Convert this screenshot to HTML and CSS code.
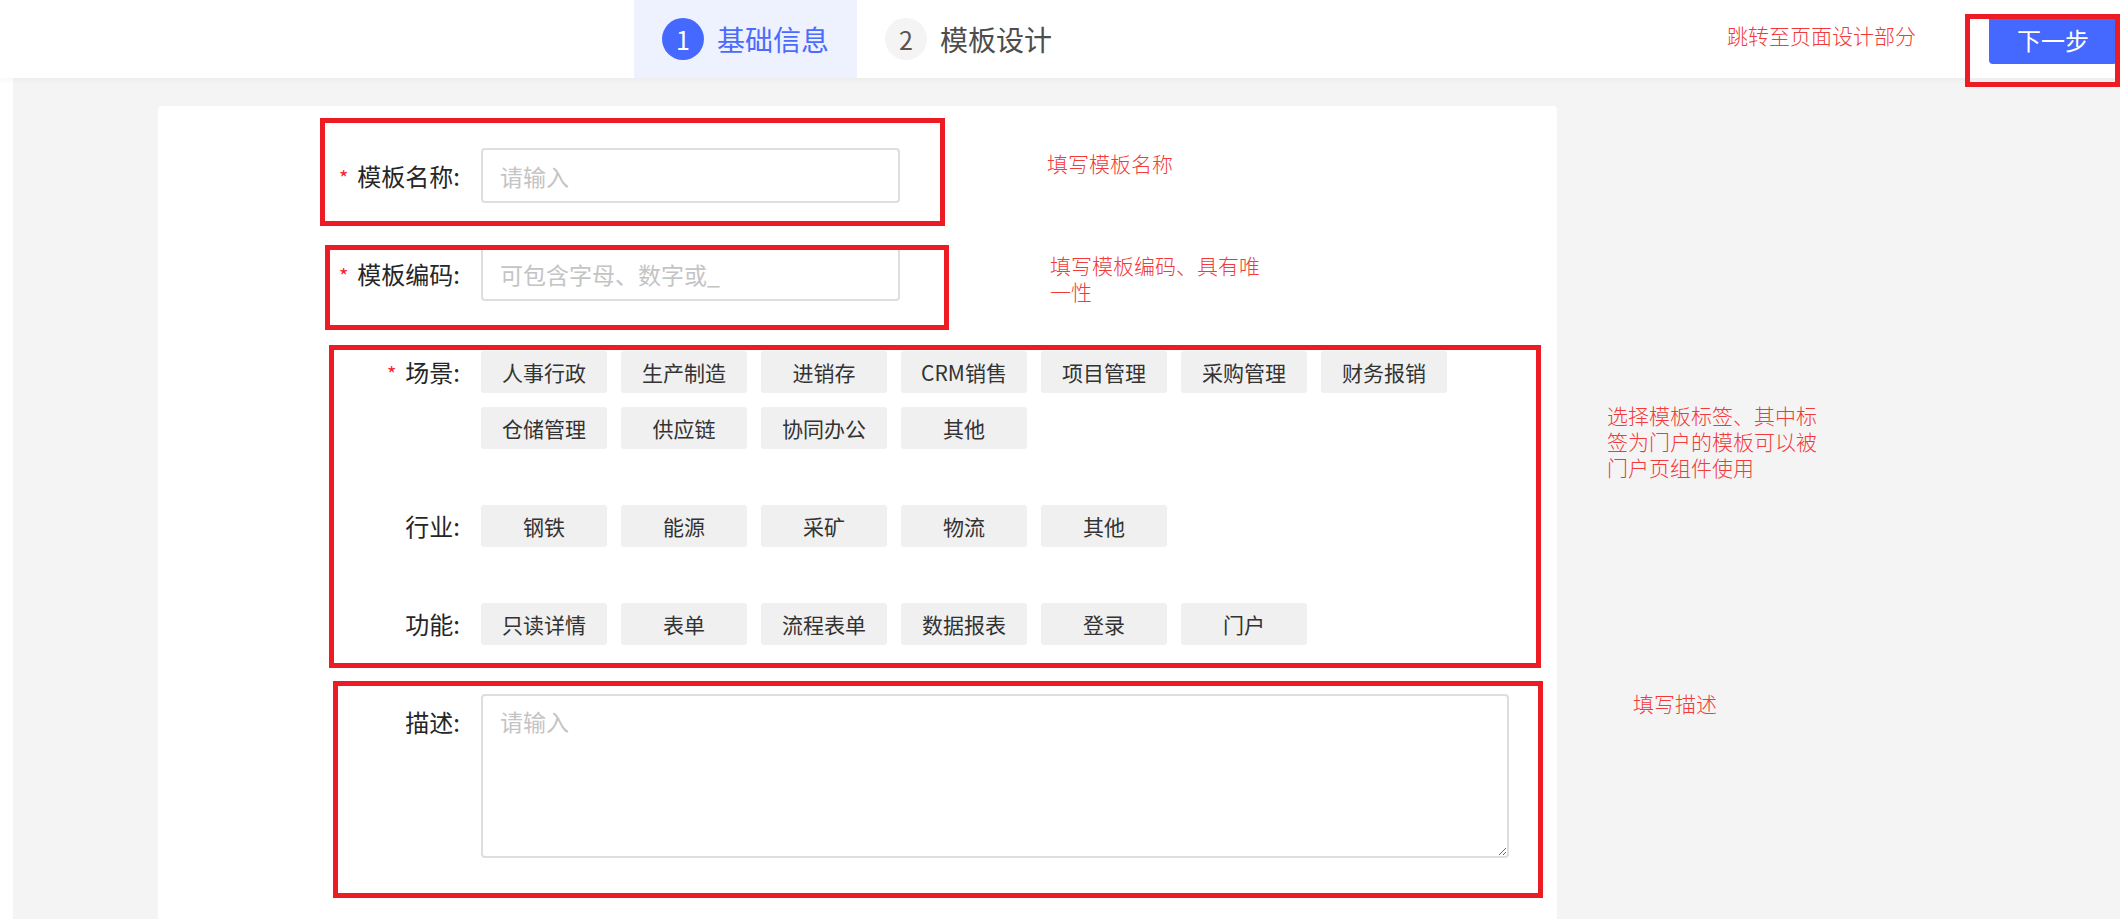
FILE: index.html
```html
<!DOCTYPE html>
<html lang="zh-CN">
<head>
    <meta charset="UTF-8">
    <meta name="viewport" content="width=device-width, initial-scale=1.0">
    <title>新建模板 - 基础信息</title>
    <link rel="stylesheet" href="styles.css">
</head>
<body>

<header class="topbar">
    <div class="steps">
        <div class="step active">
            <span class="step-num">1</span>
            <span class="step-title">基础信息</span>
        </div>
        <div class="step">
            <span class="step-num">2</span>
            <span class="step-title">模板设计</span>
        </div>
    </div>
    <button class="btn-next" type="button">下一步</button>
</header>

<main class="main">
    <div class="card">
        <form class="form">
            <div class="form-item">
                <label class="form-label"><span class="req">*</span>模板名称:</label>
                <input class="input" type="text" placeholder="请输入">
            </div>

            <div class="form-item">
                <label class="form-label"><span class="req">*</span>模板编码:</label>
                <input class="input" type="text" placeholder="可包含字母、数字或_">
            </div>

            <div class="form-item tag-item">
                <label class="form-label"><span class="req">*</span>场景:</label>
                <div class="tags">
                    <span class="tag">人事行政</span>
                    <span class="tag">生产制造</span>
                    <span class="tag">进销存</span>
                    <span class="tag">CRM销售</span>
                    <span class="tag">项目管理</span>
                    <span class="tag">采购管理</span>
                    <span class="tag">财务报销</span>
                    <span class="tag">仓储管理</span>
                    <span class="tag">供应链</span>
                    <span class="tag">协同办公</span>
                    <span class="tag">其他</span>
                </div>
            </div>

            <div class="form-item tag-item">
                <label class="form-label">行业:</label>
                <div class="tags">
                    <span class="tag">钢铁</span>
                    <span class="tag">能源</span>
                    <span class="tag">采矿</span>
                    <span class="tag">物流</span>
                    <span class="tag">其他</span>
                </div>
            </div>

            <div class="form-item tag-item">
                <label class="form-label">功能:</label>
                <div class="tags">
                    <span class="tag">只读详情</span>
                    <span class="tag">表单</span>
                    <span class="tag">流程表单</span>
                    <span class="tag">数据报表</span>
                    <span class="tag">登录</span>
                    <span class="tag">门户</span>
                </div>
            </div>

            <div class="form-item">
                <label class="form-label">描述:</label>
                <textarea class="textarea" placeholder="请输入"></textarea>
            </div>
        </form>
    </div>
</main>

<!-- review marks drawn over the page -->
<div class="marks">
    <div class="mark-box box-next"></div>
    <div class="mark-box box-name"></div>
    <div class="mark-box box-code"></div>
    <div class="mark-box box-tags"></div>
    <div class="mark-box box-desc"></div>

    <p class="note note-next">跳转至页面设计部分</p>
    <p class="note note-name">填写模板名称</p>
    <p class="note note-code">填写模板编码、具有唯一性</p>
    <p class="note note-tags">选择模板标签、其中标签为门户的模板可以被门户页组件使用</p>
    <p class="note note-desc">填写描述</p>
</div>

</body>
</html>
```

FILE: styles.css
```css
* {
    box-sizing: border-box;
}
html, body {
    height: 100%;
}
body {
    margin: 0;
    background: #ffffff;
    font-family: "Noto Sans CJK SC", "Noto Sans", sans-serif;
    color: #262626;
    overflow: hidden;
    position: relative;
}

/* top bar */
.topbar {
    height: 78px;
    display: flex;
    align-items: center;
    background: #ffffff;
    position: relative;
    z-index: 1;
    box-shadow: 0 2px 6px rgba(0, 0, 0, 0.04);
}
.steps {
    display: flex;
    align-self: stretch;
    margin-left: 634px;
}
.step {
    display: flex;
    align-items: center;
    gap: 13px;
    padding: 0 28px;
}
.step.active {
    background: #eef1fe;
}
.step-num {
    width: 42px;
    height: 42px;
    border-radius: 50%;
    background: #f4f4f4;
    color: #555555;
    font-size: 25px;
    display: flex;
    align-items: center;
    justify-content: center;
}
.step-title {
    font-size: 28px;
    color: #4d4d4d;
}
.step.active .step-num {
    background: #4568ff;
    color: #ffffff;
}
.step.active .step-title {
    color: #4a6bfb;
}
.btn-next {
    margin-left: auto;
    margin-right: 3px;
    width: 128px;
    height: 50px;
    border: none;
    border-radius: 4px;
    background: #4568ff;
    color: #ffffff;
    font-family: inherit;
    font-size: 24px;
    cursor: pointer;
}

/* content */
.main {
    height: calc(100% - 78px);
    margin-left: 13px;
    padding: 28px 0 0 145px;
    background: #f4f4f4;
    display: flex;
    flex-direction: column;
}
.card {
    flex: 1;
    width: 1399px;
    background: #ffffff;
    border-radius: 4px 4px 0 0;
    padding-top: 42px;
}
.form {
    display: flex;
    flex-direction: column;
}
.form-item {
    display: flex;
    align-items: flex-start;
    margin-bottom: 43px;
}
.form-label {
    width: 302px;
    height: 55px;
    margin-right: 21px;
    flex-shrink: 0;
    text-align: right;
    font-size: 24px;
    line-height: 55px;
    color: #262626;
}
.req {
    color: #f5222d;
    font-size: 20px;
    line-height: 1;
    margin-right: 9px;
}
.input {
    width: 419px;
    height: 55px;
    padding: 0 17px;
    border: 2px solid #dedede;
    border-radius: 4px;
    font-family: inherit;
    font-size: 23px;
    color: #262626;
    outline: none;
}
.input::placeholder,
.textarea::placeholder {
    color: #c4c4c4;
}
.textarea {
    width: 1028px;
    height: 164px;
    padding: 8px 17px;
    border: 2px solid #dedede;
    border-radius: 4px;
    font-family: inherit;
    font-size: 23px;
    line-height: 1.5;
    outline: none;
}

/* tag rows */
.tag-item {
    margin-top: 7px;
    margin-bottom: 49px;
}
.tag-item .form-label {
    height: 42px;
    line-height: 42px;
}
.tags {
    width: 1028px;
    display: flex;
    flex-wrap: wrap;
    gap: 14px;
}
.tag {
    width: 126px;
    height: 42px;
    border-radius: 3px;
    background: #f0f0f0;
    color: #333333;
    font-size: 21px;
    display: flex;
    align-items: center;
    justify-content: center;
}

/* review marks */
.marks {
    position: absolute;
    top: 0;
    left: 0;
    width: 100%;
    height: 100%;
    pointer-events: none;
    z-index: 2;
}
.mark-box {
    position: absolute;
    border: 5px solid #ed1c24;
}
.box-next { left: 1965px; top: 14px; width: 155px; height: 73px; }
.box-name { left: 320px; top: 118px; width: 625px; height: 108px; }
.box-code { left: 325px; top: 245px; width: 624px; height: 85px; }
.box-tags { left: 329px; top: 345px; width: 1212px; height: 323px; }
.box-desc { left: 333px; top: 681px; width: 1210px; height: 217px; }

.note {
    position: absolute;
    margin: 0;
    color: #f23a3a;
    font-size: 21px;
    font-weight: 300;
    line-height: 26px;
}
.note-next { left: 1727px; top: 22px; }
.note-name { left: 1047px; top: 150px; }
.note-code { left: 1050px; top: 252px; width: 212px; }
.note-tags { left: 1607px; top: 402px; width: 212px; }
.note-desc { left: 1633px; top: 690px; }
```
